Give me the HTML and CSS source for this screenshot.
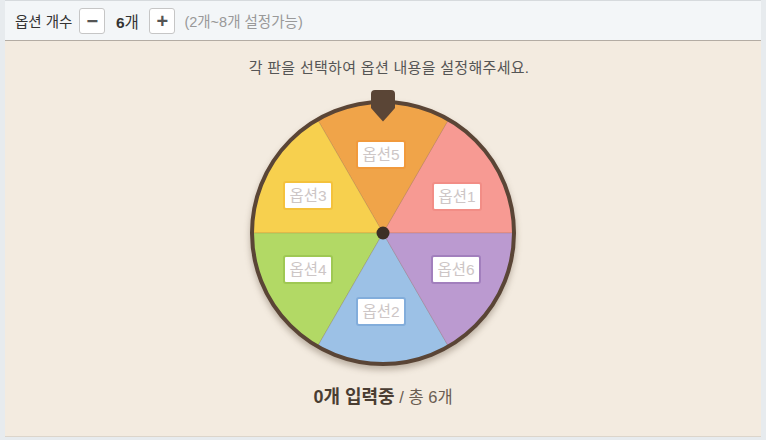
FILE: index.html
```html
<!DOCTYPE html>
<html lang="ko">
<head>
    <meta charset="UTF-8">
    <title>돌림판 옵션 설정</title>
    <link rel="stylesheet" href="styles.css">
</head>
<body>
    <div id="app">
        <!-- 옵션 개수 -->
        <div class="count-bar">
            <span class="count-label">옵션 개수</span>
            <button class="count-btn" type="button">&minus;</button>
            <span class="count-value"><b>6</b>개</span>
            <button class="count-btn" type="button">+</button>
            <span class="count-hint">(2개~8개 설정가능)</span>
        </div>

        <!-- 돌림판 -->
        <div class="board">
            <p class="guide">각 판을 선택하여 옵션 내용을 설정해주세요.</p>

            <div class="wheel">
                <svg class="wheel-svg" width="266" height="266" viewBox="0 0 266 266">
                    <g stroke="rgba(120,80,60,0.18)" stroke-width="1">
                        <path d="M133 133 L264 133 A131 131 0 0 0 198.5 19.55 Z" fill="#f79a93"/>
                        <path d="M133 133 L198.5 19.55 A131 131 0 0 0 67.5 19.55 Z" fill="#f0a449"/>
                        <path d="M133 133 L67.5 19.55 A131 131 0 0 0 2 133 Z" fill="#f7d04e"/>
                        <path d="M133 133 L2 133 A131 131 0 0 0 67.5 246.45 Z" fill="#b2d965"/>
                        <path d="M133 133 L67.5 246.45 A131 131 0 0 0 198.5 246.45 Z" fill="#9cc1e6"/>
                        <path d="M133 133 L198.5 246.45 A131 131 0 0 0 264 133 Z" fill="#bb9ad0"/>
                    </g>
                    <circle cx="133" cy="133" r="131" fill="none" stroke="#5a4536" stroke-width="4"/>
                    <circle cx="133" cy="133" r="6.5" fill="#3d2f25"/>
                </svg>

                <svg class="pointer" width="24" height="32" viewBox="0 0 24 32">
                    <path d="M0 4 Q0 0 4 0 H20 Q24 0 24 4 V18 Q18 25 12 31.5 Q6 25 0 18 Z" fill="#5a4536"/>
                </svg>

                <input class="slot slot-5" type="text" placeholder="옵션5">
                <input class="slot slot-1" type="text" placeholder="옵션1">
                <input class="slot slot-3" type="text" placeholder="옵션3">
                <input class="slot slot-4" type="text" placeholder="옵션4">
                <input class="slot slot-6" type="text" placeholder="옵션6">
                <input class="slot slot-2" type="text" placeholder="옵션2">
            </div>

            <p class="status"><b>0개 입력중</b> / 총 6개</p>
        </div>
    </div>
</body>
</html>
```

FILE: styles.css
```css
/* General Styles */
body {
    margin: 0;
    padding: 0;
    height: 440px;
    background-color: #e7ebee;
    font-family: "Liberation Sans", "Noto Sans CJK KR", sans-serif;
    color: #333;
}

#app {
    margin: 0 5px;
    border-top: 1px solid #d6dadd;
}

/* Count Bar */
.count-bar {
    display: flex;
    align-items: center;
    height: 39px;
    padding-left: 10px;
    background-color: #f3f6f8;
    border-bottom: 1px solid #b3aca4;
    font-size: 14.5px;
}

.count-label {
    margin-right: 7px;
}

.count-btn {
    width: 26px;
    height: 26px;
    padding: 0;
    border: 1px solid #c6c6c6;
    border-radius: 3px;
    background-color: #fff;
    color: #555;
    font-family: "Liberation Sans", sans-serif;
    font-size: 20px;
    font-weight: bold;
    line-height: 22px;
}

.count-value {
    width: 44px;
    text-align: center;
    font-size: 15.5px;
}

.count-hint {
    margin-left: 9px;
    color: #999;
}

/* Board */
.board {
    height: 396px;
    box-sizing: border-box;
    padding-top: 17px;
    background-color: #f3ebe0;
    border-bottom: 1px solid #dcd5cb;
    display: flex;
    flex-direction: column;
    align-items: center;
}

.guide {
    margin: 0;
    padding-left: 12px;
    line-height: 20px;
    font-size: 15px;
    letter-spacing: 0.3px;
    color: #555;
}

.wheel {
    position: relative;
    width: 266px;
    height: 266px;
    margin-top: 22px;
}

.wheel-svg {
    display: block;
    filter: drop-shadow(0 4px 3px rgba(60, 40, 20, 0.3));
}

.pointer {
    position: absolute;
    left: 121px;
    top: -10px;
}

/* Option slots */
.slot {
    position: absolute;
    width: 50px;
    height: 29px;
    box-sizing: border-box;
    padding: 0;
    border: 2px solid;
    border-radius: 3px;
    background-color: #fff;
    text-align: center;
    font-family: "Liberation Sans", "Noto Sans CJK KR", sans-serif;
    font-size: 15.5px;
}

.slot::placeholder {
    color: #cdc6c6;
}

.slot-5 { left: 106px; top: 40px;  border-color: #f19a3c; }
.slot-1 { left: 182px; top: 82px;  border-color: #f28d86; }
.slot-3 { left: 33px;  top: 81px;  border-color: #f4c23c; }
.slot-4 { left: 33px;  top: 155px; border-color: #9fc853; }
.slot-6 { left: 181px; top: 155px; border-color: #a27fbd; }
.slot-2 { left: 106px; top: 197px; border-color: #82addb; }

/* Status */
.status {
    margin: 20px 0 0;
    line-height: 22px;
    font-size: 16.5px;
    color: #6a5d52;
}

.status b {
    font-size: 18px;
    color: #4a3d32;
}
```
